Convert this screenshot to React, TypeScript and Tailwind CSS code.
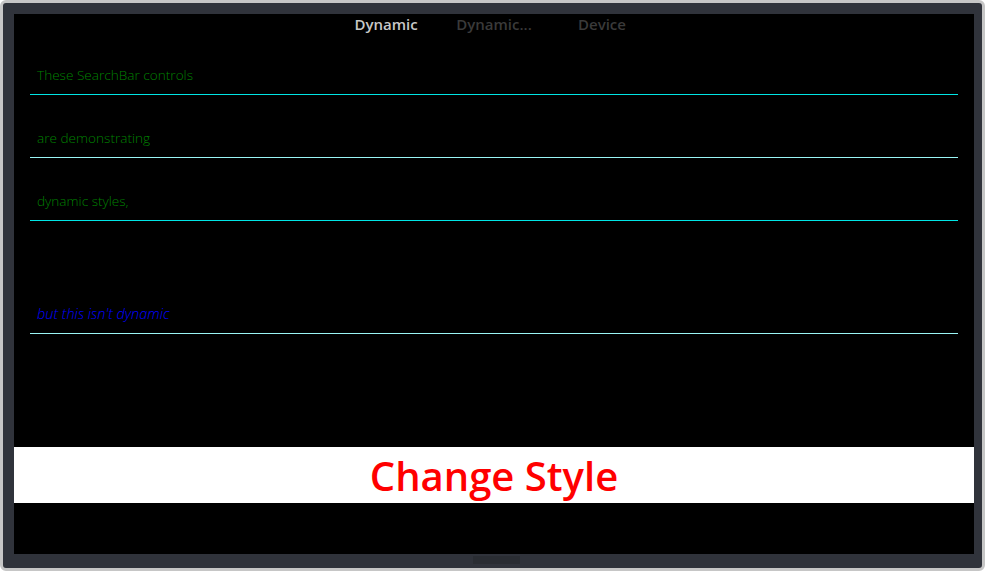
import React from "react";

const font = { fontFamily: '"Open Sans", "Noto Sans", sans-serif' };

function SearchRow({ text, line, height, italic }: { text: string; line: string; height: string; italic?: boolean }) {
    return (
        <div className={`mx-[16px] flex flex-col justify-end ${height}`}>
            <div className={`pl-[7px] pb-[9px] leading-[20px] font-light ${italic ? "italic text-[14.5px] text-[#0000ff]" : "text-[13.6px] text-[#008000]"}`}>
                {text}
            </div>
            <div className={`h-[1px] ${line}`} />
        </div>
    );
}

export default function App() {
    return (
        <div className="w-[987px] h-[572px] bg-white" style={font}>
            <div className="w-[985px] h-[571px] rounded-[6px] border-[3px] border-[#c6c6c6] bg-[#30333b] pt-[11px] pl-[11px] pr-[8px] flex flex-col">
                <div className="h-[540px] bg-black flex flex-col">
                    {/* tabs */}
                    <div className="h-[20px] flex justify-center text-[15px] leading-[20px] font-semibold">
                        <div className="w-[108px] text-center text-[#c8c8c8]">Dynamic</div>
                        <div className="w-[108px] text-center text-[#3a3a3a]">Dynamic...</div>
                        <div className="w-[108px] text-center text-[#3a3a3a]">Device</div>
                    </div>

                    <SearchRow text="These SearchBar controls" line="bg-[#00e5e5]" height="h-[61px]" />
                    <SearchRow text="are demonstrating" line="bg-[#9af5f5]" height="h-[63px]" />
                    <SearchRow text="dynamic styles," line="bg-[#00e5e5]" height="h-[63px]" />
                    <div className="h-[50px]" />
                    <SearchRow text="but this isn't dynamic" line="bg-[#9af5f5]" height="h-[63px]" italic />
                    <div className="h-[113px]" />

                    <button className="h-[56px] w-full bg-white flex items-center justify-center pt-[2px] text-[#ff0000] text-[40px] font-semibold leading-none">
                        Change Style
                    </button>
                </div>
                <div className="h-[14px] flex justify-center pt-[2px] pl-[5px]">
                    <div className="w-[47px] h-[8px] bg-[#2a2d33]" />
                </div>
            </div>
        </div>
    );
}
